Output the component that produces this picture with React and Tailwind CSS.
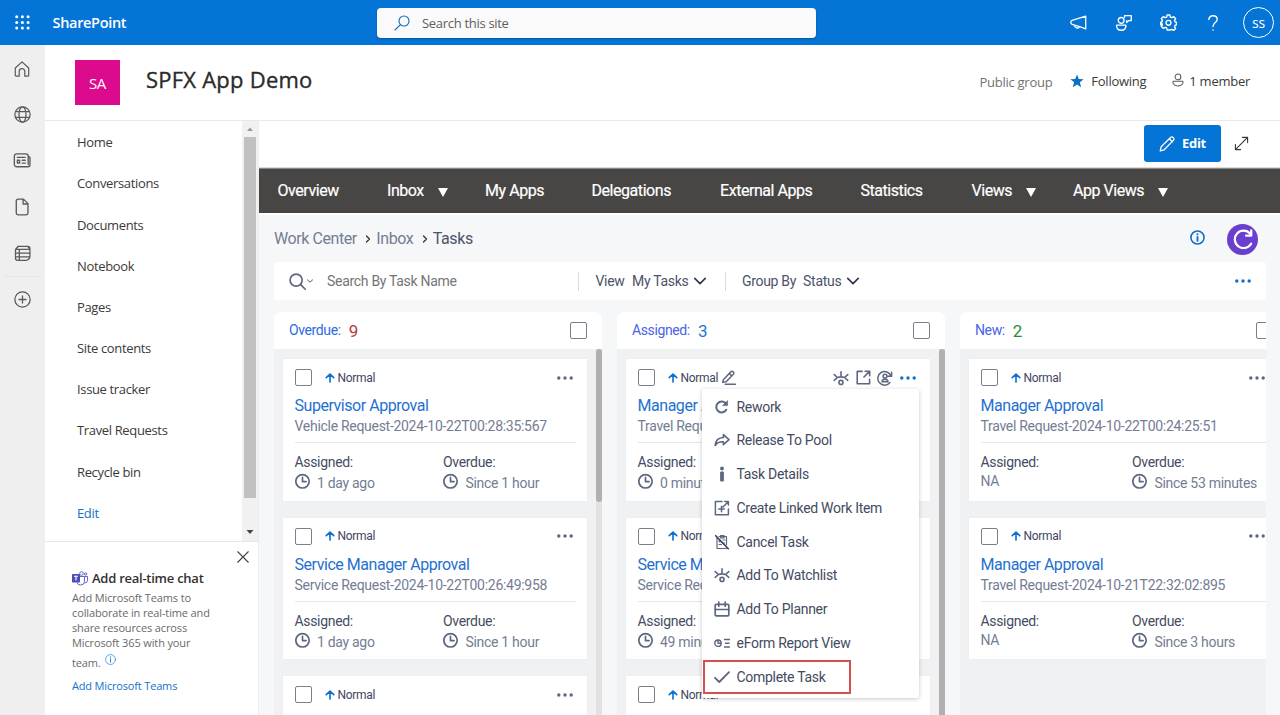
import React from "react";

const segoe = "font-['Open_Sans',sans-serif]";

function Svg({ size = 16, w = 1.2, className = "", vb = "0 0 16 16", children }) {
  return (
    <svg width={size} height={size} viewBox={vb} fill="none" stroke="currentColor" strokeWidth={w} strokeLinecap="round" strokeLinejoin="round" className={`shrink-0 ${className}`}>
      {children}
    </svg>
  );
}

const Dots = ({ className = "" }) => (
  <Svg className={className}>
    <g fill="currentColor" stroke="none">
      <circle cx="1.8" cy="8" r="1.7" /><circle cx="8" cy="8" r="1.7" /><circle cx="14.2" cy="8" r="1.7" />
    </g>
  </Svg>
);
const Clock = () => (
  <Svg w={1.7} className="text-[#5d6780]"><circle cx="7.500" cy="8.300" r="6.700" /><path d="M7.500 4.300v4.300h3.600" /></Svg>
);
const Eye = () => (
  <Svg w={1.6}>
    <path d="M1.200 4.600l3.200 2.900q3.600-1.300 7.200 0l3.200-2.900M1.200 10.300l3.200-2.800M14.800 10.300l-3.200-2.800M8 1.700v5.100" />
    <circle cx="8" cy="12.400" r="2" />
  </Svg>
);
const Rework = () => (
  <Svg w={2}><path d="M12.300 10.800A5.400 5.400 0 1 1 11.600 4.300" /><path d="M13.600 1.800v4.800H8.800z" fill="currentColor" strokeWidth=".6" /></Svg>
);
const Share = () => (
  <Svg w={1.6}><path d="M9.400 2.600l5.600 5-5.600 5V9.700C5.600 9.500 3 10.600 1.200 13.500 1.500 8.800 4.500 5.700 9.400 5.500z" /></Svg>
);
const InfoI = () => (
  <Svg><g fill="currentColor" stroke="none"><circle cx="8" cy="2.500" r="1.900" /><rect x="6.100" y="5.600" width="3.800" height="9.800" rx="1.200" /></g></Svg>
);
const Linked = () => (
  <Svg w={1.5}><path d="M8 1.400H1.400v13.300h13V9M7.500 6.200v5.600M4.700 9h5.600M9 7l5-5M10.700 1.400h3.700v3.700" /></Svg>
);
const Cancel = () => (
  <Svg w={1.2}>
    <path d="M3 3.500v11h9.500M5 2.500h7.500v8.200M6.500 1.700h3.600v2.200H6.500zM5 7l1 1M5 10.500h2.500M9 6h2M9 9h1.500" />
    <path d="M1.700 1.700l12.600 13" strokeWidth="1.600" className="stroke-[#343b4f]" />
  </Svg>
);
const Planner = () => (
  <Svg w={1.7}><rect x="1.200" y="3.300" width="13.600" height="11.500" rx="1" /><path d="M1.200 8.500h13.600M4.800 1v4.200M11.200 1v4.200" /></Svg>
);
const Report = () => (
  <Svg w={1.4}><circle cx="4" cy="8.200" r="3.200" /><path d="M4 5.500v2.700h2.800M10.500 4.500h5M11.500 8.200h3.500M10.500 12h5" /></Svg>
);
const Check = () => <Svg w={1.800}><path d="M1 8.800l4.300 4.200L15 3.200" /></Svg>;

const rail = [
  <Svg key="h" size={16} w={1.2}><path d="M1.300 7L8 .9 14.700 7v7.200q0 1-1 1h-2.900V10.500a2.800 2.800 0 0 0-5.600 0v4.700H2.300q-1 0-1-1z" /></Svg>,
  <Svg key="g" size={17} w={1.2}><circle cx="8" cy="8" r="7.200" /><ellipse cx="8" cy="8" rx="3.300" ry="7.200" /><path d="M1.500 5.300h13M1.500 10.700h13" /></Svg>,
  <Svg key="n" size={18} w={1.200} className="-mt-[2px]"><path d="M13.500 14H3.200a2 2 0 0 1-2-2V4.500a2 2 0 0 1 2-2h8.300a2 2 0 0 1 2 2V12M13.500 5h.6a1 1 0 0 1 1 1v6.200a1.800 1.800 0 0 1-1.800 1.800" /><path d="M3.800 5.600h7M8.200 8.200h2.700M8.200 10.800h2.700" /><rect x="3.900" y="8.200" width="2" height="2.500" /></Svg>,
  <Svg key="f" size={18} w={1.200}><path d="M9.300 1H4.500a1.600 1.600 0 0 0-1.600 1.600v10.800A1.600 1.600 0 0 0 4.500 15h7.200a1.600 1.600 0 0 0 1.600-1.600V5zM9 1.200V5.300h4.200" /></Svg>,
  <Svg key="l" size={17} w={1.200} className="mt-[2px]"><path d="M4 1.200h9q2 0 2 2v7M4 1.200L1.400 4.200v8.300q0 2 2 2h8.200q3.400-.8 3.400-4.300M1.400 4.200h13.400M1.400 7.700H15M1.400 11.200H15M5 4.200v10.300M13 1.200l2 3" /></Svg>,
  <Svg key="p" size={17} w={1.200}><circle cx="8" cy="8" r="7.200" /><path d="M8 4.700v6.600M4.700 8h6.600" /></Svg>,
];

const Box = () => <span className="block h-[17px] w-[17.500px] shrink-0 rounded-[2px] border border-[#7a7f8b] bg-white" />;
const Chevron = () => <Svg size={12} w={2.200} className="text-[#2f374d]"><path d="M1 4.500L8 11.500 15 4.500" /></Svg>;

function Priority() {
  return (
    <span className="flex items-center">
      <Svg size={10} w={2.600} className="text-[#0b6fd0]"><path d="M8 14.500V2M2 7.500L8 1.800l6 5.700" /></Svg>
      <span className="ml-[2.500px] text-[12px] leading-4 tracking-[-0.300px] text-[#3f4760]">Normal</span>
    </span>
  );
}

function Field({ label, value }) {
  return (
    <div>
      <div className="text-[14px] leading-[18px] whitespace-nowrap tracking-[-0.320px] text-[#454d63]">{label}</div>
      {value === "NA" ? (
        <div className="mt-[1px] text-[14px] leading-[18px] tracking-[-0.300px] text-[#737d93]">NA</div>
      ) : (
        <div className="mt-[2px] flex items-start">
          <Clock />
          <span className="ml-[6.500px] text-[14px] leading-[20px] tracking-[-0.300px] whitespace-nowrap text-[#737d93]">{value}</span>
        </div>
      )}
    </div>
  );
}

function Card({ title, sub, assigned, overdue, active }) {
  return (
    <div className="h-[141.500px] shrink-0 bg-white px-[11.500px] pt-[10px] shadow-[0_0_2px_rgba(0,0,0,0.04)]">
      <div className="flex h-[17px] items-center">
        <Box />
        <span className="ml-[13px]"><Priority /></span>
        {active && <Svg size={15} w={1.600} className="ml-[3px] text-[#5d6780]"><path d="M2.500 10.500L10.500 1.800q1.200-1 2.500.2t.2 2.500L5.500 12.500l-3.700.7zM8.800 3.600l2.600 2.700M4.500 15.200h10.800" /></Svg>}
        <span className="ml-auto flex items-center gap-[6.500px] pr-[3px] text-[#5d6780]">
          {active && (
            <>
              <Eye />
              <Svg size={15} w={1.700}><path d="M6.500 1.500H1.300v13.200h13.200V10M8.500 7.500l5.800-6M9.700 1.300h4.900v4.900" /></Svg>
              <Svg w={1.500}><path d="M14 6A6.800 6.800 0 1 0 13 12.500M14.600 2.300v4h-4" /><circle cx="8" cy="6.200" r="1.900" /><path d="M5 11.800q.2-2.500 3-2.500t3 2.500z" /></Svg>
            </>
          )}
          <Dots className={active ? "text-[#0b6fd0]" : "text-[#5d6780]"} />
        </span>
      </div>
      <div className="mt-[10px] text-[16px] leading-[20px] tracking-[-0.460px] whitespace-nowrap text-[#1f71d0]">{title}</div>
      <div className="mt-[1px] h-[26px] border-b border-[#e6e8ec] text-[14px] leading-[19px] tracking-[-0.290px] whitespace-nowrap text-[#737d93]">{sub}</div>
      <div className="mt-[10px] grid grid-cols-2 gap-4">
        <Field label="Assigned:" value={assigned} />
        <Field label="Overdue:" value={overdue} />
      </div>
    </div>
  );
}

const menu = [
  ["Rework", Rework], ["Release To Pool", Share], ["Task Details", InfoI], ["Create Linked Work Item", Linked],
  ["Cancel Task", Cancel], ["Add To Watchlist", Eye], ["Add To Planner", Planner], ["eForm Report View", Report], ["Complete Task", Check],
];

function Menu() {
  return (
    <div className="absolute left-[85px] top-[77px] z-10 h-[309px] w-[217px] rounded-[3px] bg-white pt-[0.800px] shadow-[0_1px_4px_rgba(0,0,0,0.22)]">
      {menu.map(([label, Icon]) => (
        <div key={label} className="flex h-[33.750px] items-center pl-[12px] text-[#5d6780]">
          <Icon />
          <span className="ml-[6.500px] text-[14px] leading-5 tracking-[-0.290px] text-[#434b61]">{label}</span>
        </div>
      ))}
      <div className="absolute left-[1px] top-[271px] h-[34px] w-[148px] border-2 border-[#d64f4f]" />
    </div>
  );
}

const columns = [
  { name: "Overdue:", count: 9, color: "text-[#b83a40]", label: "text-[#2f6be0]", bar: "h-[153px]", cards: [
    { title: "Supervisor Approval", sub: "Vehicle Request-2024-10-22T00:28:35:567", assigned: "1 day ago", overdue: "Since 1 hour" },
    { title: "Service Manager Approval", sub: "Service Request-2024-10-22T00:26:49:958", assigned: "1 day ago", overdue: "Since 1 hour" },
    { title: "Service Manager Approval", sub: "Service Request-2024-10-22T00:26:49:958", assigned: "1 day ago", overdue: "Since 1 hour" },
  ] },
  { name: "Assigned:", count: 3, color: "text-[#1f78d1]", label: "text-[#4a63e6]", bar: "h-[380px]", active: true, cards: [
    { title: "Manager Approval", sub: "Travel Request-2024-10-22T00:28:35:567", assigned: "0 minutes ago", overdue: "NA", active: true },
    { title: "Service Manager Approval", sub: "Service Request-2024-10-22T00:26:49:958", assigned: "49 minutes ago", overdue: "NA" },
    { title: "Service Manager Approval", sub: "Service Request-2024-10-22T00:26:49:958", assigned: "1 day ago", overdue: "NA" },
  ] },
  { name: "New:", count: 2, color: "text-[#1f8f3a]", label: "text-[#4a63e6]", cards: [
    { title: "Manager Approval", sub: "Travel Request-2024-10-22T00:24:25:51", assigned: "NA", overdue: "Since 53 minutes" },
    { title: "Manager Approval", sub: "Travel Request-2024-10-21T22:32:02:895", assigned: "NA", overdue: "Since 3 hours" },
  ] },
];

function Column({ c }) {
  return (
    <section className="relative flex w-[328px] shrink-0 flex-col">
      <div className="flex h-[37px] shrink-0 items-center rounded-t-[7px] bg-white pl-[15px] pr-[15px]">
        <span className={`text-[14px] tracking-[-0.380px] ${c.label}`}>{c.name}</span>
        <span className={`ml-[8px] text-[17px] leading-5 ${c.color}`}>{c.count}</span>
        <span className="ml-auto"><Box /></span>
      </div>
      <div className="flex min-h-0 flex-1 bg-[#f0f1f3]">
        <div className="flex min-w-0 flex-1 flex-col gap-[17px] overflow-hidden px-[9px] pt-[10px]">
          {c.cards.map((k, i) => <Card key={i} {...k} />)}
        </div>
        {c.bar && <div className="w-[6px] shrink-0 bg-[#e2e2e3]"><div className={`w-[6px] rounded-full bg-[#b0b0b0] ${c.bar}`} /></div>}
      </div>
      {c.active && <Menu />}
    </section>
  );
}

const tabs = [
  ["Overview", "w-[109.500px]"], ["Inbox", "w-[98px]", "ml-[14px]"], ["My Apps", "w-[106.500px]"], ["Delegations", "w-[128.500px]"], ["External Apps", "w-[140.500px]"],
  ["Statistics", "w-[111px]"], ["Views", "w-[101.500px]", "ml-[14px]"], ["App Views", "w-[120px]", "ml-[14px]"],
];

const links = ["Home", "Conversations", "Documents", "Notebook", "Pages", "Site contents", "Issue tracker", "Travel Requests", "Recycle bin"];

function TopBar() {
  return (
    <header className={`flex h-[45px] shrink-0 items-center bg-[#0475d6] text-white ${segoe}`}>
      <svg width="15" height="15" viewBox="0 0 15 15" className="ml-[14.500px] shrink-0 fill-white">
        {[1.700, 7.400, 13.100].map((y) => [1.700, 7.400, 13.100].map((x) => <circle key={`${x}-${y}`} cx={x} cy={y} r="1.500" />))}
      </svg>
      <div className="ml-[23px] w-[324.500px] text-[14.500px] font-semibold tracking-[-0.320px]">SharePoint</div>
      <div className="flex h-[30px] w-[439px] items-center rounded-[4px] bg-[#fafafa] shadow-[0_1px_2px_rgba(0,0,0,0.25)]">
        <Svg size={16} w={1.100} className="ml-[17px] mt-px text-[#0c6cc4]"><circle cx="10" cy="6" r="5" /><path d="M6.400 9.600L1 15" /></Svg>
        <span className="ml-[12px] mt-[2px] text-[13px] tracking-[-0.300px] text-[#605e5c]">Search this site</span>
      </div>
      <div className="ml-auto flex items-center pr-[6px]">
        <Svg size={17} w={1.200}><path d="M14.800 2v12L9.800 12.200 2 9.800Q.7 9 .7 7.800T2 6zM4 10.500c0 2.500 4.200 3.500 5 1.700" /></Svg>
        <Svg size={17} w={1.300} className="ml-[28px]"><circle cx="5.800" cy="6" r="2.700" /><path d="M1.500 10.500h8.700c.6 3-1.500 4.800-4.300 4.800S1 13.500 1.500 10.500zM9 3V1.500h6.300v4.700h-2.300l-2 1.800V6.200" /></Svg>
        <Svg size={17} w={1.300} className="ml-[28px]">
          <path d="M6.700 1h2.600l.4 1.900 1.500.6 1.700-1 1.800 1.800-1 1.700.6 1.500 1.200.3v2.400l-1.200.4-.6 1.500 1 1.600-1.800 1.800-1.700-1-1.500.6L9.300 15H6.700l-.4-1.900-1.500-.6-1.700 1-1.800-1.800 1-1.600-.6-1.500L.5 10.200V7.800l1.200-.3.600-1.500-1-1.700 1.800-1.800 1.700 1 1.500-.6z" /><circle cx="8" cy="8.300" r="2.300" />
        </Svg>
        <Svg size={16} w={1.400} className="ml-[28px]"><path d="M3.800 4.600C3.800 2.400 5.600.8 8 .8s4.200 1.600 4.200 3.700C12.200 7.500 8 7.800 8 11.600" /><circle cx="8" cy="15" r=".8" fill="currentColor" stroke="none" /></Svg>
        <span className="ml-[22px] flex size-[31px] items-center justify-center rounded-full border border-white text-[14px] tracking-[-0.200px]">ss</span>
      </div>
    </header>
  );
}

function SideNav() {
  return (
    <aside className={`flex w-[214px] shrink-0 flex-col border-r border-[#ececec] bg-white ${segoe}`}>
      <div className="flex h-[420px] shrink-0">
        <nav className="flex flex-1 flex-col pl-[32px] pt-[1.300px] text-[13px] tracking-[-0.350px] text-[#3b3a39]">
          {links.map((l) => <span key={l} className="flex h-[41.200px] items-center">{l}</span>)}
          <span className="flex h-[41.200px] items-center text-[#1272ca]">Edit</span>
        </nav>
        <div className="flex w-[16px] flex-col items-center bg-[#f1f1f1]">
          <svg width="16" height="16" viewBox="0 0 16 16" className="fill-[#9a9a9a]"><path d="M5 10l3-3.500L11 10z" /></svg>
          <div className="h-[361px] w-[12px] bg-[#c1c1c1]" />
          <svg width="16" height="16" viewBox="0 0 16 16" className="mt-auto fill-[#454545]"><path d="M4.500 5h7L8 9z" /></svg>
        </div>
      </div>
      <div className="flex flex-1 flex-col border-t border-[#e6e6e6] pl-[27px]">
        <Svg size={14} w={1.300} className="ml-auto mr-[8px] mt-[8px] text-[#444]"><path d="M2 2l12 12M14 2L2 14" /></Svg>
        <div className="mt-[5px] flex h-[19px] items-center">
          <svg width="16" height="15" viewBox="0 0 16 15" className="shrink-0">
            <g fill="none" stroke="#6064c8" strokeWidth="1"><circle cx="9.500" cy="2.500" r="1.800" /><circle cx="13.600" cy="3" r="1.200" /><path d="M8 5.500h4.500v5q0 3.500-4 3.500-3 0-3.500-2.500M12.500 5.500h3v4q0 2.500-3 2.500" /></g>
            <rect x="0" y="3" width="8" height="8.500" rx=".8" fill="#4a4fb8" />
            <path d="M2 5.300h4M4 5.300v4.300" stroke="#fff" strokeWidth="1.100" />
          </svg>
          <span className="ml-[4px] text-[13px] font-semibold tracking-[-0.250px] text-[#323130]">Add real-time chat</span>
        </div>
        <div className="mt-[2px] text-[11px] leading-[15px] tracking-[-0.130px] whitespace-nowrap text-[#6b6967]">
          Add Microsoft Teams to<br />collaborate in real-time and<br />share resources across<br />Microsoft 365 with your
          <div className="mt-[3px] flex h-[17px] items-end">team.
            <Svg size={11} w={1.100} className="mb-[5px] ml-[4px] text-[#2b88d8]"><circle cx="8" cy="8" r="7.200" /><path d="M8 7v4.500M8 4.200v.4" strokeWidth="1.500" /></Svg>
          </div>
        </div>
        <div className="mt-[8px] text-[11px] leading-[15px] tracking-[-0.170px] text-[#1272ca]">Add Microsoft Teams</div>
      </div>
    </aside>
  );
}

export default function App() {
  return (
    <div className="flex h-[715px] w-[1280px] flex-col overflow-hidden bg-white font-['Roboto',sans-serif]">
      <TopBar />
      <div className="flex min-h-0 flex-1">
        <div className="flex w-[45px] shrink-0 flex-col items-center bg-[#efefef] pt-[0.600px] pr-px text-[#5c5a58]">
          {rail.map((icon, i) => (
            <div key={i} className={`flex h-[46.200px] w-[37px] items-center justify-center ${i === 4 ? "border-b border-[#e8e6e6]" : ""}`}>{icon}</div>
          ))}
        </div>
        <div className="flex min-w-0 flex-1 flex-col">
          <div className={`flex h-[76px] shrink-0 border-b border-[#e9e9e9] pl-[30px] pr-[30px] ${segoe}`}>
            <div className="mt-[15px] flex size-[45px] items-center justify-center bg-[#dc0a8c] pt-[2px] text-[15px] tracking-[-0.300px] text-white">SA</div>
            <div className="ml-[26px] mt-[19px] text-[22px] leading-[30px] tracking-[0.230px] text-[#2b2a29] [-webkit-text-stroke:0.350px_#2b2a29]">SPFX App Demo</div>
            <div className="ml-auto flex pt-[27px] text-[13px] leading-[20px] tracking-[-0.260px] text-[#3b3a39]">
              <span className="text-[#74716f]">Public group</span>
              <svg width="14" height="14" viewBox="0 0 16 16" className="ml-[18px] mt-[2px] fill-[#0d6fc8]"><path d="M8 .5l2 5.200 5.600.3-4.300 3.500 1.400 5.500L8 11.900 3.300 15l1.400-5.500L.4 6 6 5.700z" /></svg>
              <span className="ml-[7px] -mt-px">Following</span>
              <Svg size={14} w={1.200} className="ml-[25px] mt-[1px] text-[#605e5c]"><circle cx="8" cy="4.500" r="3.300" /><path d="M2.300 9.500h11.400c.8 3.300-2 5.300-5.700 5.300s-6.500-2-5.700-5.300z" /></Svg>
              <span className="ml-[4px] -mt-px">1 member</span>
            </div>
          </div>
          <div className="flex min-h-0 flex-1">
            <SideNav />
            <main className="flex min-w-0 flex-1 flex-col">
              <div className="flex h-[47px] shrink-0 items-start border-b border-[#dddcdb] pl-[885px] pt-[4px]">
                <div className={`flex h-[37px] w-[77px] items-center rounded-[3px] bg-[#0475d6] pl-[15px] text-white ${segoe}`}>
                  <Svg size={16} w={1.300}><path d="M1.200 14.800l1-4L11.800 1.300q1.300-.9 2.500.3t.3 2.500L5.200 13.800zM10.300 2.800l3 3" /></Svg>
                  <span className="ml-[7px] text-[13px] font-bold tracking-[-0.300px]">Edit</span>
                </div>
                <Svg size={15} w={1.200} className="ml-[13px] mt-[11px] text-[#3b3a39]"><path d="M1.500 14.500l13-13M9 1.500h5.500V7M1.500 9v5.500H7" /></Svg>
              </div>
              <div className="flex h-[45px] shrink-0 items-center border-t border-[#8a8886] bg-[#484644] pl-[18.500px] text-[16px] tracking-[-0.450px] text-white [-webkit-text-stroke:0.200px_#fff]">
                {tabs.map(([t, w, arrow]) => (
                  <span key={t} className={`flex shrink-0 items-center whitespace-nowrap ${w}`}>
                    {t}
                    {arrow && <svg width="10" height="9" viewBox="0 0 10 9" className={`mt-[3px] fill-white ${arrow}`}><path d="M0 0h10L5 9z" /></svg>}
                  </span>
                ))}
              </div>
              <div className="flex min-h-0 flex-1 flex-col overflow-hidden border-t-2 border-white bg-[#f6f7f9] pl-[15px] pr-[14px]">
                <div className="flex h-[47px] shrink-0 items-center pt-px text-[16px] tracking-[-0.420px] text-[#737d93]">
                  <span>Work Center</span>
                  <Svg size={8} w={2.500} className="ml-[7.500px] mr-[4px] text-[#333]"><path d="M5 2l6 6-6 6" /></Svg>
                  <span>Inbox</span>
                  <Svg size={8} w={2.500} className="ml-[7.500px] mr-[4px] text-[#333]"><path d="M5 2l6 6-6 6" /></Svg>
                  <span className="text-[#4b536a]">Tasks</span>
                  <Svg size={15} w={1.700} className="ml-auto -mt-[4px] text-[#0f6fc8]"><circle cx="8" cy="8" r="7" /><path d="M8 7.500v4M8 4.500v.2" strokeWidth="2" /></Svg>
                  <span className="ml-[22px] mr-[8px] flex size-[31px] items-center justify-center rounded-full bg-[#6b3fcd] text-white">
                    <Svg size={20} w={1.800}><path d="M14.500 11.800A7 7 0 1 1 13.700 3.600M14.600 1v4.200h-4.200" /></Svg>
                  </span>
                </div>
                <div className="flex h-[38px] shrink-0 items-center rounded-[3px] bg-white text-[14px] tracking-[-0.300px] text-[#4b536a]">
                  <Svg size={17} w={1.600} className="ml-[15px] text-[#5d6780]"><circle cx="6.700" cy="6.700" r="5.700" /><path d="M11 11l4.300 4.300" /></Svg>
                  <Svg size={6} w={2.500} className="ml-[1px]"><path d="M1 5l7 6 7-6" /></Svg>
                  <span className="ml-[14px] w-[251px] text-[#757575]">Search By Task Name</span>
                  <span className="h-[19px] w-px bg-[#d9dbe0]" />
                  <span className="ml-[16.500px]">View</span>
                  <span className="ml-[7.500px] mr-[5.500px]">My Tasks</span><Chevron />
                  <span className="ml-[19px] h-[19px] w-px bg-[#d9dbe0]" />
                  <span className="ml-[16px]">Group By</span>
                  <span className="ml-[7px] mr-[5.500px]">Status</span><Chevron />
                  <Dots className="ml-auto mr-[15px] text-[#0f6fc8]" />
                </div>
                <div className="mt-[12px] flex min-h-0 flex-1 gap-[15px] overflow-hidden">
                  {columns.map((c) => <Column key={c.name} c={c} />)}
                </div>
              </div>
            </main>
          </div>
        </div>
      </div>
    </div>
  );
}
